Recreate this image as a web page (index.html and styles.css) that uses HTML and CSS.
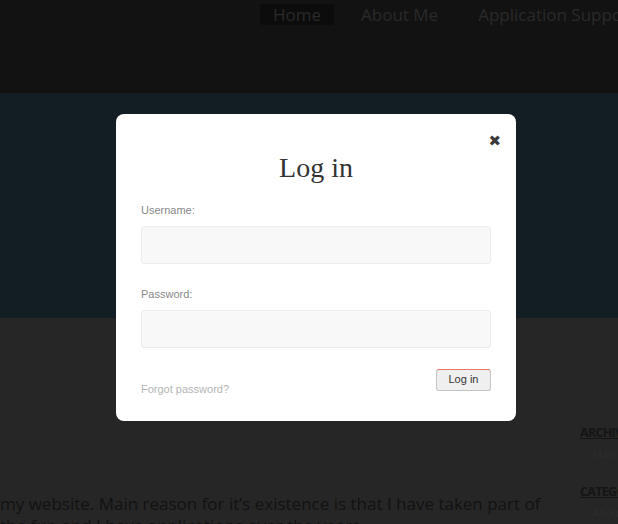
FILE: index.html
```html
<!DOCTYPE html>
<html>
<head>
<meta charset="utf-8">
<link rel="stylesheet" href="styles.css">
</head>
<body>
<header class="site-header">
  <nav class="nav">
    <a class="nav-item active">Home</a>
    <a class="nav-item">About Me</a>
    <a class="nav-item">Application Support</a>
  </nav>
</header>
<section class="banner"></section>
<main class="content">
  <article class="post">
    <p>my website. Main reason for it’s existence is that I have taken part of the fun and I have applications over the years</p>
  </article>
  <aside class="sidebar">
    <h3 class="widget-title">ARCHIVES</h3>
    <ul class="widget-list"><li>March 2013</li></ul>
    <h3 class="widget-title">CATEGORIES</h3>
    <ul class="widget-list"><li>About</li><li>Uncategorized</li></ul>
  </aside>
</main>

<div class="modal">
  <span class="close">✖</span>
  <h1 class="modal-title">Log in</h1>
  <label class="field-label">Username:</label>
  <div class="field"></div>
  <label class="field-label">Password:</label>
  <div class="field"></div>
  <div class="modal-footer">
    <a class="forgot">Forgot password?</a>
    <button class="login-btn">Log in</button>
  </div>
</div>
</body>
</html>
```

FILE: styles.css
```css
html, body {
  margin: 0;
  padding: 0;
}
body {
  background: #262626;
  width: 618px;
  height: 524px;
  overflow: hidden;
  position: relative;
  font-family: "Open Sans", sans-serif;
}
.site-header {
  height: 93px;
  background: #121212;
}
.nav {
  display: flex;
  padding-left: 260px;
  white-space: nowrap;
  padding-top: 4px;
}
.nav-item {
  font-size: 17px;
  line-height: 21px;
  font-weight: 400;
  color: #2a2a2a;
  padding: 0 13px;
  margin-right: 14px;
  border-radius: 2px;
}
.nav-item.active {
  background: #0c0c0c;
}
.banner {
  height: 225px;
  background: #131e24;
}
.content {
  display: flex;
  padding-top: 108px;
}
.post {
  width: 580px;
  flex: none;
}
.post p {
  margin: 0;
  font-size: 17px;
  line-height: 22px;
  color: #121212;
  width: 560px;
  padding-top: 67px;
}
.sidebar {
  flex: none;
  width: 120px;
}
.widget-title {
  margin: 0;
  font-size: 12.5px;
  line-height: 14px;
  font-weight: 700;
  color: #151515;
  text-decoration: underline;
  letter-spacing: -0.7px;
}
.widget-list {
  list-style: none;
  margin: 5px 0 23px;
  padding: 0 0 0 12px;
  font-size: 11px;
  line-height: 17px;
  color: #2c2c2c;
}

.modal {
  position: absolute;
  top: 114px;
  left: 116px;
  width: 400px;
  height: 307px;
  box-sizing: border-box;
  background: #fff;
  border-radius: 8px;
  padding: 0 25px;
  display: flex;
  flex-direction: column;
  font-family: "Liberation Sans", Arial, sans-serif;
}
.close {
  position: absolute;
  top: 18px;
  right: 15px;
  font-size: 15px;
  color: #3a3a3a;
  font-family: "DejaVu Sans", sans-serif;
}
.modal-title {
  margin: 38px 0 0;
  font-family: "Liberation Serif", serif;
  font-weight: 400;
  font-size: 28px;
  line-height: 32px;
  color: #333;
  text-align: center;
}
.field-label {
  font-size: 11px;
  line-height: 13px;
  color: #888;
  margin-top: 20px;
}
.field-label + .field {
  margin-top: 9px;
}
.field + .field-label {
  margin-top: 24px;
}
.field {
  height: 38px;
  box-sizing: border-box;
  background: #f8f8f8;
  border: 1px solid #ededed;
  border-radius: 3px;
}
.modal-footer {
  margin-top: 21px;
  display: flex;
  justify-content: space-between;
  align-items: flex-end;
}
.forgot {
  font-size: 11px;
  line-height: 13px;
  color: #b5b5b5;
  margin-bottom: -5px;
}
.login-btn {
  width: 55px;
  height: 22px;
  box-sizing: border-box;
  background: #efefef;
  border: 1px solid #c4c4c4;
  border-top-color: #e9766b;
  border-radius: 3px;
  font-family: "Liberation Sans", Arial, sans-serif;
  font-size: 11px;
  color: #333;
  padding: 0 0 2px;
  line-height: 16px;
}
```
